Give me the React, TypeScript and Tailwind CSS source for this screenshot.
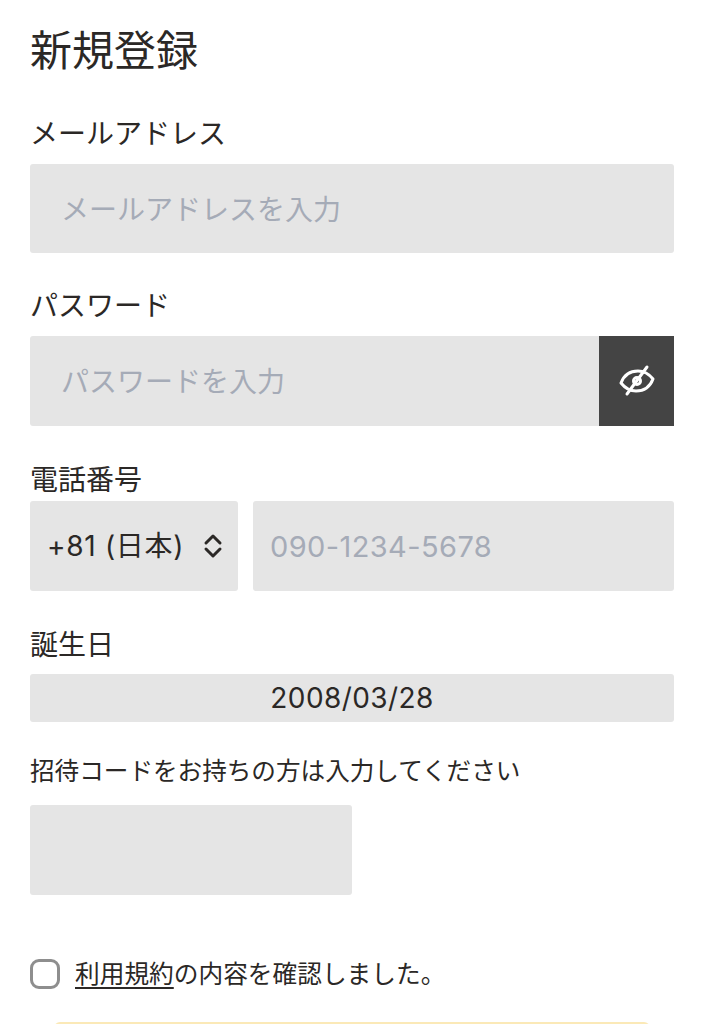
const font = { fontFamily: '"Inter", "Noto Sans CJK JP", sans-serif' };

function Label({ children, className = "" }: { children: React.ReactNode; className?: string }) {
  return <label className={`block text-[#2b2826] ${className}`}>{children}</label>;
}

function TextInput({ placeholder, className = "" }: { placeholder?: string; className?: string }) {
  return (
    <input
      placeholder={placeholder}
      className={`h-[89px] rounded-[3px] bg-[#e5e5e5] text-[#2b2826] outline-none placeholder:text-[#a5abb7] ${className}`}
    />
  );
}

function EyeSlash() {
  return (
    <svg width="36" height="36" viewBox="0 0 36 36" fill="none" stroke="#fff" strokeWidth="3" strokeLinecap="round" strokeLinejoin="round">
      <path d="M2 20C5 12 11 8 19 8 25 8 30 11 34 16 31 24 25 28 17 28 11 28 6 25 2 20Z" />
      <circle cx="18" cy="18" r="3.5" />
      <path d="M28 4 8 31" />
    </svg>
  );
}

function Chevrons() {
  return (
    <svg width="20" height="26" viewBox="0 0 20 26" fill="none" stroke="#2b2826" strokeWidth="3" strokeLinecap="round" strokeLinejoin="round">
      <path d="M3 10 10 3l7 7" />
      <path d="M3 16l7 7 7-7" />
    </svg>
  );
}

export default function App() {
  return (
    <div className="h-[1024px] overflow-hidden bg-white px-[30px]" style={font}>
      <h1 className="mt-[26px] text-[42px] leading-[50px] font-normal text-[#2b2826]">新規登録</h1>

      <Label className="mt-[38px] text-[28px] leading-[40px]">メールアドレス</Label>
      <TextInput placeholder="メールアドレスを入力" className="mt-[10px] w-full pt-[2px] pl-[31px] text-[28px]" />

      <Label className="mt-[33px] text-[28px] leading-[40px]">パスワード</Label>
      <div className="mt-[10px] flex h-[90px]">
        <TextInput placeholder="パスワードを入力" className="h-full min-w-0 flex-1 rounded-r-none pt-[2px] pl-[31px] text-[28px]" />
        <button className="flex w-[75px] items-center justify-center bg-[#444444]">
          <EyeSlash />
        </button>
      </div>

      <Label className="mt-[34px] text-[28px] leading-[40px]">電話番号</Label>
      <div className="mt-[1px] flex h-[90px] gap-[15px]">
        <div className="flex w-[208px] items-center justify-between rounded-[3px] bg-[#e5e5e5] pr-[15px] pl-[17px] text-[28px] tracking-[0.7px] text-[#2b2826]">
          <span>+81 (日本)</span>
          <Chevrons />
        </div>
        <TextInput placeholder="090-1234-5678" className="h-full min-w-0 flex-1 pl-[17px] text-[29px] tracking-[0.4px]" />
      </div>

      <Label className="mt-[34px] text-[28px] leading-[40px]">誕生日</Label>
      <div className="mt-[9px] flex h-[48px] items-center justify-center rounded-[3px] bg-[#e5e5e5] text-[28px] tracking-[0.4px] text-[#2b2826]">
        2008/03/28
      </div>

      <Label className="mt-[31px] text-[24.6px] leading-[36px]">招待コードをお持ちの方は入力してください</Label>
      <TextInput className="mt-[16px] block h-[90px] w-[322px]" />

      <div className="mt-[64px] flex items-center">
        <span className="h-[30px] w-[30px] rounded-[9px] border-[3px] border-[#8e8e8e] bg-white" />
        <p className="ml-[15px] text-[24.7px] leading-[30px] text-[#2b2826]">
          <span className="underline underline-offset-[4px]">利用規約</span>の内容を確認しました。
        </p>
      </div>

      <button className="mx-auto mt-[33px] block h-[70px] w-[596px] rounded-[6px] bg-[#fbe9b7]" />
    </div>
  );
}
